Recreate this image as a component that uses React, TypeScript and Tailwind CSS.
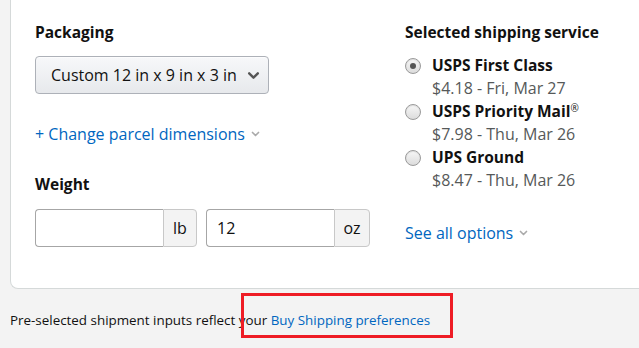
import React from "react";

const font = { fontFamily: '"Open Sans", "Liberation Sans", sans-serif' };

function Chevron({ className }: { className?: string }) {
  return (
    <svg viewBox="0 0 12 8" className={className} fill="none" stroke="currentColor" strokeWidth={2.2} strokeLinecap="round" strokeLinejoin="round">
      <path d="M2 2l4 4 4-4" />
    </svg>
  );
}

function Radio({ checked }: { checked?: boolean }) {
  return (
    <span className="w-[16px] h-[16px] rounded-full border border-[#9a9a9a] bg-gradient-to-b from-[#f7f7f7] to-[#dcdcdc] flex items-center justify-center shrink-0 shadow-[inset_0_1px_1px_rgba(0,0,0,0.1)]">
      {checked && <span className="w-[6px] h-[6px] rounded-full bg-[#555]" />}
    </span>
  );
}

const services = [
  { name: "USPS First Class", sup: "", detail: "$4.18 - Fri, Mar 27", checked: true },
  { name: "USPS Priority Mail", sup: "®", detail: "$7.98 - Thu, Mar 26", checked: false },
  { name: "UPS Ground", sup: "", detail: "$8.47 - Thu, Mar 26", checked: false },
];

export default function App() {
  return (
    <div className="w-[639px] h-[348px] overflow-hidden bg-[#f3f3f3] text-[#111]" style={font}>
      <div className="ml-[10px] w-[660px] h-[289px] bg-white border-l border-b border-[#d5d9d9] rounded-bl-[8px] flex pl-[24px]">
        <div className="w-[370px] pt-[20px]">
          <h3 className="text-[15.5px] font-bold leading-[24px]">Packaging</h3>
          <div className="mt-[12px] w-[234px] h-[38px] rounded-[4px] border border-[#adb1b8] bg-gradient-to-b from-[#f7f8fa] to-[#e7e9ec] flex items-center pl-[15px] pr-[8px] shadow-[0_1px_0_rgba(255,255,255,0.6)_inset]">
            <span className="text-[16px] flex-1">Custom 12 in x 9 in x 3 in</span>
            <Chevron className="w-[13px] h-[9px] text-[#555]" />
          </div>
          <div className="mt-[28px] flex items-center gap-[6px] text-[#0066c0] text-[16px] leading-[24px]">
            <span>+ Change parcel dimensions</span>
            <Chevron className="w-[9px] h-[6px] text-[#aaa]" />
          </div>
          <h3 className="mt-[26px] text-[15.5px] font-bold leading-[24px]">Weight</h3>
          <div className="mt-[13px] flex gap-[9px]">
            <div className="flex h-[38px]">
              <div className="w-[128px] border border-[#a6a6a6] border-r-0 rounded-l-[4px] bg-white" />
              <div className="w-[34px] border border-[#c8c8c8] rounded-r-[4px] bg-[#f3f3f3] flex items-center justify-center text-[16px]">lb</div>
            </div>
            <div className="flex h-[38px]">
              <div className="w-[128px] border border-[#a6a6a6] border-r-0 rounded-l-[4px] bg-white flex items-center pl-[10px] text-[16px]">12</div>
              <div className="w-[36px] border border-[#c8c8c8] rounded-r-[4px] bg-[#f3f3f3] flex items-center justify-center text-[16px]">oz</div>
            </div>
          </div>
        </div>
        <div className="pt-[20px]">
          <h3 className="text-[15.5px] font-bold leading-[24px]">Selected shipping service</h3>
          <div className="mt-[9px] flex flex-col">
            {services.map((s) => (
              <div key={s.name} className="flex gap-[11px] h-[46px]">
                <div className="pt-[5px]">
                  <Radio checked={s.checked} />
                </div>
                <div>
                  <div className="text-[15.5px] font-bold leading-[24px]">
                    {s.name}
                    {s.sup && <sup className="text-[10px] font-normal">{s.sup}</sup>}
                  </div>
                  <div className="text-[16px] text-[#565959] leading-[22px]">{s.detail}</div>
                </div>
              </div>
            ))}
          </div>
          <div className="mt-[30px] flex items-center gap-[6px] text-[#0066c0] text-[16px] leading-[24px]">
            <span>See all options</span>
            <Chevron className="w-[9px] h-[6px] text-[#aaa]" />
          </div>
        </div>
      </div>
      <div className="relative pl-[10px] pt-[21px] text-[13.4px] leading-[20px]">
        <span>Pre-selected shipment inputs reflect your </span>
        <span className="text-[#0066c0]">Buy Shipping preferences</span>
        <div className="absolute left-[241px] top-[4px] w-[212px] h-[45px] border-[3px] border-[#ee1c25]" />
      </div>
    </div>
  );
}
